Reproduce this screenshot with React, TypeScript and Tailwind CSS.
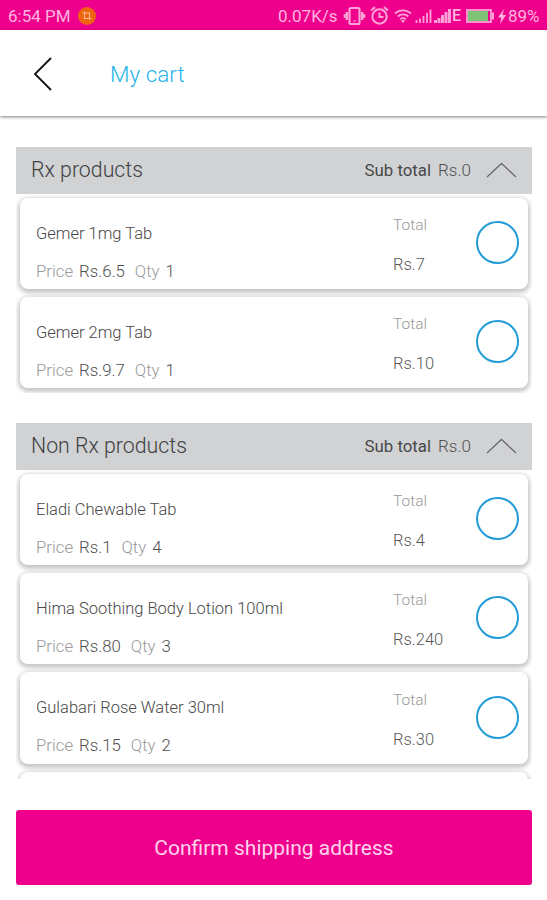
import React, { useState } from 'react';

interface CartItem {
  name: string;
  price: string;
  qty: number;
  total: string;
}

const RX_ITEMS: CartItem[] = [
  { name: 'Gemer 1mg Tab', price: '6.5', qty: 1, total: '7' },
  { name: 'Gemer 2mg Tab', price: '9.7', qty: 1, total: '10' },
];

const NON_RX_ITEMS: CartItem[] = [
  { name: 'Eladi Chewable Tab', price: '1', qty: 4, total: '4' },
  { name: 'Hima Soothing Body Lotion 100ml', price: '80', qty: 3, total: '240' },
  { name: 'Gulabari Rose Water 30ml', price: '15', qty: 2, total: '30' },
];

function StatusBar() {
  return (
    <div className="flex h-[30px] shrink-0 items-center bg-[#ef008c] pl-2 pr-[7px] pt-[2px] text-[17px] leading-[20px] text-[#ffb5df]">
      <span className="w-[63px] whitespace-nowrap">6:54 PM</span>

      {/* Notification badge */}
      <svg className="ml-[7px]" width="18" height="18" viewBox="0 0 18 18" fill="none">
        <circle cx="9" cy="9" r="9" fill="#ee6410" />
        <path d="M4.5 6h7v6.5M6.5 4.5v7h7" stroke="#ffb98a" strokeWidth="1.2" />
      </svg>

      <div className="ml-auto flex items-center">
        <span className="w-[62px] whitespace-nowrap">0.07K/s</span>

        {/* Vibrate */}
        <svg className="ml-[3px]" width="23" height="20" viewBox="0 0 23 20" fill="none" stroke="#ffa0d6">
          <rect x="6.5" y="2" width="10" height="16" rx="1.5" strokeWidth="2.2" />
          <path d="M3.8 6v8M19.2 6v8" strokeWidth="2.4" />
          <path d="M1.8 8v4M21.2 8v4" strokeWidth="2.2" />
          <path d="M10.5 15h2" strokeWidth="1.5" />
        </svg>

        {/* Alarm */}
        <svg className="ml-[4px]" width="19" height="20" viewBox="0 0 19 20" fill="none" stroke="#ffa0d6" strokeWidth="2.1">
          <circle cx="9.5" cy="10.5" r="7.2" />
          <path d="M9.5 6.5V11h4M1 4.5l4-3.4M18 4.5l-4-3.4" />
        </svg>

        {/* Wifi */}
        <svg className="ml-[5px]" width="18" height="16" viewBox="0 0 18 16" fill="none" stroke="#ffa0d6" strokeWidth="1.8">
          <path d="M1 5.5c4.5-4.3 11.5-4.3 16 0M3.700 8.5c3-2.9 7.6-2.9 10.6 0M6.2 11.3c1.6-1.5 4-1.5 5.6 0" />
          <path d="M9 15l-2-2.3c1.2-.9 2.8-.9 4 0z" fill="#ffa0d6" stroke="none" />
        </svg>

        {/* Signal strength, both sims */}
        <svg className="ml-[3px]" width="37" height="16" viewBox="0 0 37 16" stroke="#ffa0d6" strokeWidth="1.8">
          <path d="M1.5 15v-3M5 15v-4.5M8.5 15V8M12 15V5M15.5 15V1.5" />
          <path d="M20.5 15v-3M24 15v-5M27.5 15V7M31 15V4M34.5 15V1" strokeWidth="3" />
        </svg>
        <span className="w-[10px] text-[16px] font-medium">E</span>

        {/* Battery */}
        <svg className="ml-[4px]" width="29" height="14" viewBox="0 0 29 14" fill="none">
          <rect x="1" y="1" width="24" height="12" stroke="#ffa0d6" strokeWidth="1.8" />
          <rect x="2" y="2" width="20" height="10" fill="#7cc576" />
          <path d="M27 3.5v7" stroke="#ffa0d6" strokeWidth="2" />
        </svg>
        <svg className="ml-[3px]" width="8" height="15" viewBox="0 0 8 15" fill="#ffb5df">
          <path d="M6 0L0 8.500h3.300L2 15 8 6H4.500z" />
        </svg>
        <span className="ml-[2px] w-[32px] whitespace-nowrap">89%</span>
      </div>
    </div>
  );
}

function CartCard({ item }: { item: CartItem }) {
  const [checked, setChecked] = useState(false);

  return (
    <div className="flex h-[91.5px] shrink-0 rounded-[8px] bg-white pl-4 pr-[9px] font-light shadow-[0_2px_4px_2px_rgba(0,0,0,0.22)]">
      <div className="w-[357px] pt-[25px]">
        <p className="whitespace-nowrap text-[16.5px] leading-[22px] text-[#484848]">{item.name}</p>
        <p className="mt-[15px] flex whitespace-nowrap text-[16.8px] leading-[22px] text-[#999]">
          <span className="w-[43px]">Price</span>
          <span className="text-[#505050]">Rs.{item.price}</span>
          <span className="ml-[10px] mr-[6px]">Qty</span>
          <span className="text-[#505050]">{item.qty}</span>
        </p>
      </div>
      <div className="pt-[16.5px] text-[16.5px] leading-[22px]">
        <p className="text-[15.5px] text-[#999]">Total</p>
        <p className="mt-[18px] text-[#585858]">Rs.{item.total}</p>
      </div>
      <button
        aria-label={item.name}
        onClick={() => setChecked(!checked)}
        className={`ml-auto mt-[23.5px] size-[43px] rounded-full border-2 border-[#219cd8] ${checked ? 'bg-[#219cd8]' : 'bg-white'}`}
      />
    </div>
  );
}

function SectionHeader({ title }: { title: string }) {
  return (
    <div className="flex h-[46.5px] shrink-0 items-center bg-[#d0d2d4] px-[15px]">
      <h2 className="text-[21.3px] font-light leading-[26px] text-[#3f4042]">{title}</h2>
      <span className="ml-auto text-[16.8px] text-[#484848]">Sub total</span>
      <span className="ml-[7px] w-[33px] text-[17px] font-light text-[#505050]">Rs.0</span>
      <svg className="ml-[15px]" width="31" height="16" viewBox="0 0 31 16" fill="none" stroke="#68696b" strokeWidth="1.3">
        <path d="M1 15L15.5 1.5 30 15" />
      </svg>
    </div>
  );
}

export default function App() {
  return (
    <div className="flex h-[900px] w-[547px] flex-col overflow-hidden bg-white font-['Roboto',sans-serif]">
      <StatusBar />

      {/* Title bar */}
      <header className="flex h-[86px] shrink-0 items-center bg-white pl-[33px] pt-[2px] shadow-[0_1px_3px_rgba(0,0,0,0.5)]">
        <svg width="20" height="34" viewBox="0 0 20 34" fill="none" stroke="#111" strokeWidth="1.8">
          <path d="M18 1L2 17l16 16" />
        </svg>
        <h1 className="ml-[57px] text-[22.5px] font-light leading-[28px] text-[#25b2ea]">My cart</h1>
      </header>

      <main className="mt-[31px] flex h-[632px] shrink-0 flex-col pl-4 pr-[15px]">
        <section>
          <SectionHeader title="Rx products" />
          <div className="flex h-[199px] flex-col gap-[7.9px] overflow-hidden px-[4px] pt-[4px]">
            {RX_ITEMS.map((item) => (
              <CartCard key={item.name} item={item} />
            ))}
          </div>
        </section>

        <section className="mt-[30.5px]">
          <SectionHeader title="Non Rx products" />
          <div className="flex h-[309px] flex-col gap-[7.9px] overflow-hidden px-[4px] pt-[4px]">
            {NON_RX_ITEMS.map((item) => (
              <CartCard key={item.name} item={item} />
            ))}
            {/* Top edge of the next card, cut off by the list */}
            <div className="h-[91px] shrink-0 rounded-[8px] bg-white shadow-[0_2px_4px_2px_rgba(0,0,0,0.22)]" />
          </div>
        </section>
      </main>

      <button className="mx-4 mt-[31px] h-[75px] w-[516px] shrink-0 rounded-[3px] bg-[#ef008c] pt-[2px] text-[21px] text-[#ffd3ec]">
        Confirm shipping address
      </button>
    </div>
  );
}
